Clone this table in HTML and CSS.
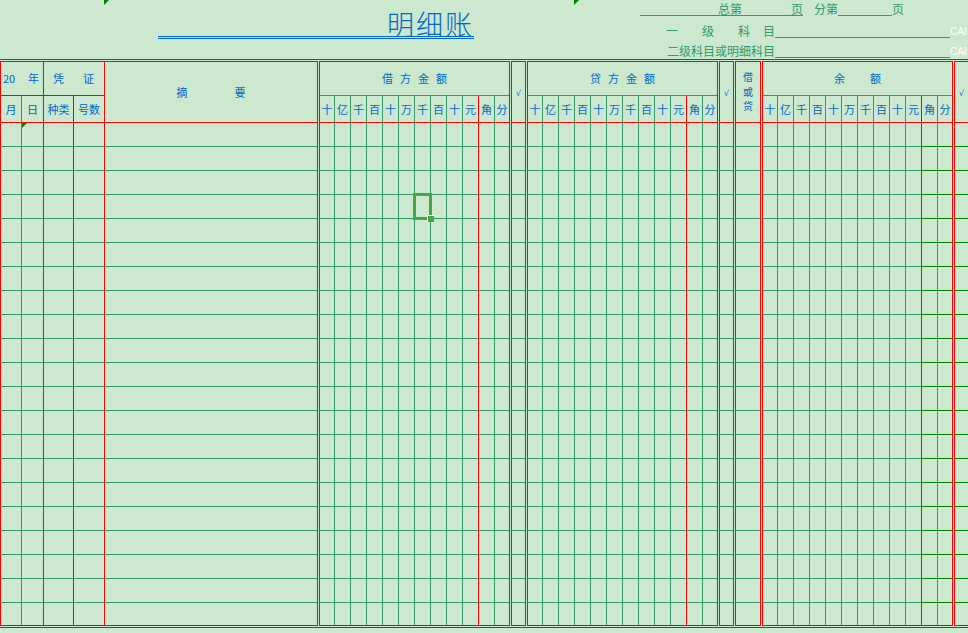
FILE: index.html
```html
<!DOCTYPE html>
<html lang="zh-CN">
<head>
<meta charset="utf-8">
<title>明细账</title>
<link rel="stylesheet" href="styles.css">
</head>
<body>
<header class="top">
  <span class="tri tri-a"></span>
  <span class="tri tri-b"></span>
  <h1 class="title">明细账</h1>
  <div class="meta">
    <div class="meta-line l1">
      <span class="u u-total"><span>总第</span><span class="push">页</span></span>
      <span class="sub">分第</span>
      <span class="u u-sub"></span>
      <span>页</span>
    </div>
    <div class="meta-line l2">
      <span class="spread"><span class="s1">一</span><span class="s2">级</span><span class="s3">科</span><span>目</span></span>
      <span class="u u-long"></span>
      <span class="cai">CAI</span>
    </div>
    <div class="meta-line l3">
      <span class="lead">二级科目或明细科目</span>
      <span class="u u-long"></span>
      <span class="cai">CAI</span>
    </div>
  </div>
</header>
<div class="rule"></div>
<main class="sheet">
  <section class="grp g-main">
    <div class="head head-main">
      <div class="h1 h-year"><span>20</span><span>年</span></div>
      <div class="h1 h-voucher"><span>凭</span><span>证</span></div>
      <div class="h-summary"><span>摘</span><span>要</span></div>
      <div class="h2 c1 b-g">月</div>
      <div class="h2 c2 b-r">日</div>
      <div class="h2 c3 b-dg">种类</div>
      <div class="h2 c4 b-r">号数</div>
    </div>
    <div class="body body-main">
      <span class="tri tri-c"></span>
      <div class="b-g"></div>
      <div class="b-r"></div>
      <div class="b-dg"></div>
      <div class="b-r"></div>
      <div></div>
    </div>
  </section>

  <section class="grp g-money">
    <div class="head head-money">
      <div class="h-title"><span>借</span><span>方</span><span>金</span><span>额</span></div>
      <div class="d">十</div><div class="d">亿</div><div class="d">千</div><div class="d">百</div><div class="d">十</div><div class="d">万</div><div class="d">千</div><div class="d">百</div><div class="d">十</div><div class="d red-r">元</div><div class="d">角</div><div class="d no-r">分</div>
    </div>
    <div class="body body-money">
      <div class="mc"></div><div class="mc"></div><div class="mc"></div><div class="mc"></div><div class="mc"></div><div class="mc"></div><div class="mc"></div><div class="mc"></div><div class="mc"></div><div class="mc red-r"></div><div class="mc"></div><div class="mc no-r"></div>
      <div class="sel"></div>
      <div class="handle"></div>
    </div>
  </section>

  <section class="grp g-check">
    <div class="head head-solo"><span class="tick">√</span></div>
    <div class="body"></div>
  </section>

  <section class="grp g-money">
    <div class="head head-money">
      <div class="h-title"><span>贷</span><span>方</span><span>金</span><span>额</span></div>
      <div class="d">十</div><div class="d">亿</div><div class="d">千</div><div class="d">百</div><div class="d">十</div><div class="d">万</div><div class="d">千</div><div class="d">百</div><div class="d">十</div><div class="d red-r">元</div><div class="d">角</div><div class="d no-r">分</div>
    </div>
    <div class="body body-money">
      <div class="mc"></div><div class="mc"></div><div class="mc"></div><div class="mc"></div><div class="mc"></div><div class="mc"></div><div class="mc"></div><div class="mc"></div><div class="mc"></div><div class="mc red-r"></div><div class="mc"></div><div class="mc no-r"></div>
    </div>
  </section>

  <section class="grp g-check">
    <div class="head head-solo"><span class="tick">√</span></div>
    <div class="body"></div>
  </section>

  <section class="grp g-dir">
    <div class="head head-solo"><span class="dir-text"><span>借</span><span>或</span><span>贷</span></span></div>
    <div class="body"></div>
  </section>

  <section class="grp g-money">
    <div class="head head-money">
      <div class="h-title h-wide"><span>余</span><span>额</span></div>
      <div class="d">十</div><div class="d">亿</div><div class="d">千</div><div class="d">百</div><div class="d">十</div><div class="d">万</div><div class="d">千</div><div class="d">百</div><div class="d">十</div><div class="d red-r">元</div><div class="d">角</div><div class="d no-r">分</div>
    </div>
    <div class="body body-money">
      <div class="mc"></div><div class="mc"></div><div class="mc"></div><div class="mc"></div><div class="mc"></div><div class="mc"></div><div class="mc"></div><div class="mc"></div><div class="mc"></div><div class="mc red-r"></div><div class="mc dk"></div><div class="mc no-r dk"></div>
    </div>
  </section>

  <section class="grp g-check">
    <div class="head head-solo"><span class="tick">√</span></div>
    <div class="body dk"></div>
  </section>
</main>
<div class="rule rule-bottom"></div>
</body>
</html>
```

FILE: styles.css
```css
* { box-sizing: border-box; margin: 0; padding: 0; }

html, body { width: 968px; height: 633px; overflow: hidden; }

body {
  background: #cce8cf;
  font-family: "Noto Sans CJK SC", "Noto Sans", sans-serif;
  color: #0066cc;
}

/* ---------- top header ---------- */
.top { position: relative; display: flex; height: 59px; }

.tri {
  position: absolute;
  width: 0;
  height: 0;
  border-top: 5px solid #008000;
  border-right: 5px solid transparent;
}
.tri-a { left: 104px; top: 0; }
.tri-b { left: 574px; top: 0; }
.tri-c { left: 21px; top: 0; z-index: 1; }

.title {
  flex: none;
  margin-left: 158px;
  width: 316px;
  height: 39px;
  border-bottom: 3px double #0066cc;
  padding-top: 10px;
  font-size: 27px;
  line-height: 27px;
  letter-spacing: 2px;
  font-weight: 300;
  text-align: right;
  white-space: nowrap;
  color: #0066cc;
}

.meta {
  flex: none;
  margin-left: 166px;
  display: flex;
  flex-direction: column;
  color: #339966;
  font-size: 12px;
  line-height: 12px;
  white-space: nowrap;
}
.meta-line { display: flex; align-items: flex-end; }
.meta-line > span { padding-bottom: 1px; }
.l1 { height: 16px; }
.l2 { height: 22px; }
.l3 { height: 20px; }

.u {
  align-self: stretch;
  display: flex;
  align-items: flex-end;
  border-bottom: 1px solid #339966;
}
.meta-line > .u { padding-bottom: 0; }
.u-total { width: 163px; padding-left: 78px; }
.push { margin-left: auto; }
.sub { margin-left: 11px; }
.u-sub { width: 54px; }
.u-long { width: 175px; }

.spread { display: flex; width: 135px; padding-left: 26px; }
.s1, .s2 { margin-right: 24px; }
.s3 { margin-right: 13px; }
.lead { width: 135px; padding-left: 27px; }

.cai {
  font-family: "Liberation Sans", Arial, sans-serif;
  font-size: 10px;
  line-height: 10px;
  color: #ffffff;
}

/* ---------- ledger ---------- */
.rule { height: 1px; width: 968px; background: #ff0000; }
.rule-bottom { margin-top: 1px; }

.sheet { display: flex; gap: 1px; margin-top: 1px; height: 565px; }

.grp {
  flex: none;
  display: flex;
  flex-direction: column;
  border: 1px solid #ff0000;
}
.g-main { width: 318px; }
.g-money { width: 191px; }
.g-check { width: 15px; }
.g-dir { width: 26px; }

.head { flex: none; height: 61px; font-size: 11px; line-height: 11px; }

.body {
  flex: 1;
  position: relative;
  background: repeating-linear-gradient(to bottom, transparent 0 23px, #339966 23px 24px);
}
.dk {
  background: repeating-linear-gradient(to bottom, transparent 0 23px, #008000 23px 24px);
}

/* main group */
.head-main {
  display: grid;
  grid-template-columns: 21px 22px 30px 31px 212px;
  grid-template-rows: 34px 27px;
}
.h1 {
  grid-row: 1;
  display: flex;
  justify-content: space-between;
  align-items: center;
  border-right: 1px solid #ff0000;
  border-bottom: 1px solid #008000;
}
.h-year { grid-column: 1 / 3; padding: 0 4px 0 2px; }
.h-voucher { grid-column: 3 / 5; padding: 0 10px 0 9px; }
.h-summary {
  grid-column: 5;
  grid-row: 1 / 3;
  display: flex;
  justify-content: center;
  align-items: center;
  gap: 47px;
  border-bottom: 1px solid #ff0000;
}
.h2 {
  grid-row: 2;
  display: flex;
  justify-content: center;
  align-items: center;
  border-bottom: 1px solid #ff0000;
}
.c1 { grid-column: 1; }
.c2 { grid-column: 2; }
.c3 { grid-column: 3; }
.c4 { grid-column: 4; }

.b-g { border-right: 1px solid #339966; }
.b-r { border-right: 1px solid #ff0000; }
.b-dg { border-right: 1px solid #008000; }

.body-main {
  display: grid;
  grid-template-columns: 21px 22px 30px 31px 212px;
}

/* money groups */
.head-money {
  display: grid;
  grid-template-columns: 15px repeat(10, 16px) 14px;
  grid-template-rows: 34px 27px;
}
.h-title {
  grid-column: 1 / -1;
  display: flex;
  justify-content: center;
  align-items: center;
  gap: 7px;
  border-bottom: 1px solid #339966;
}
.h-wide { gap: 25px; }
.d {
  display: flex;
  justify-content: center;
  align-items: center;
  border-right: 1px solid #339966;
  border-bottom: 1px solid #ff0000;
}
.body-money {
  display: grid;
  grid-template-columns: 15px repeat(10, 16px) 14px;
}
.mc { border-right: 1px solid #339966; }
.red-r { border-right-color: #ff0000; }
.no-r { border-right: 0; }

/* single-column groups */
.head-solo {
  display: flex;
  justify-content: center;
  align-items: center;
  border-bottom: 1px solid #ff0000;
}
.tick {
  font-family: "DejaVu Sans", sans-serif;
  font-size: 8px;
  line-height: 8px;
  padding-top: 3px;
}
.dir-text {
  display: flex;
  flex-direction: column;
  align-items: center;
  font-size: 10px;
  line-height: 14.5px;
}

/* selected cell */
.sel {
  position: absolute;
  left: 93px;
  top: 70px;
  width: 19px;
  height: 27px;
  border: 3px solid #48a548;
}
.handle {
  position: absolute;
  left: 107px;
  top: 92px;
  width: 7px;
  height: 7px;
  background: #48a548;
  border-top: 1px solid #ffffff;
  border-left: 1px solid #ffffff;
}
```
